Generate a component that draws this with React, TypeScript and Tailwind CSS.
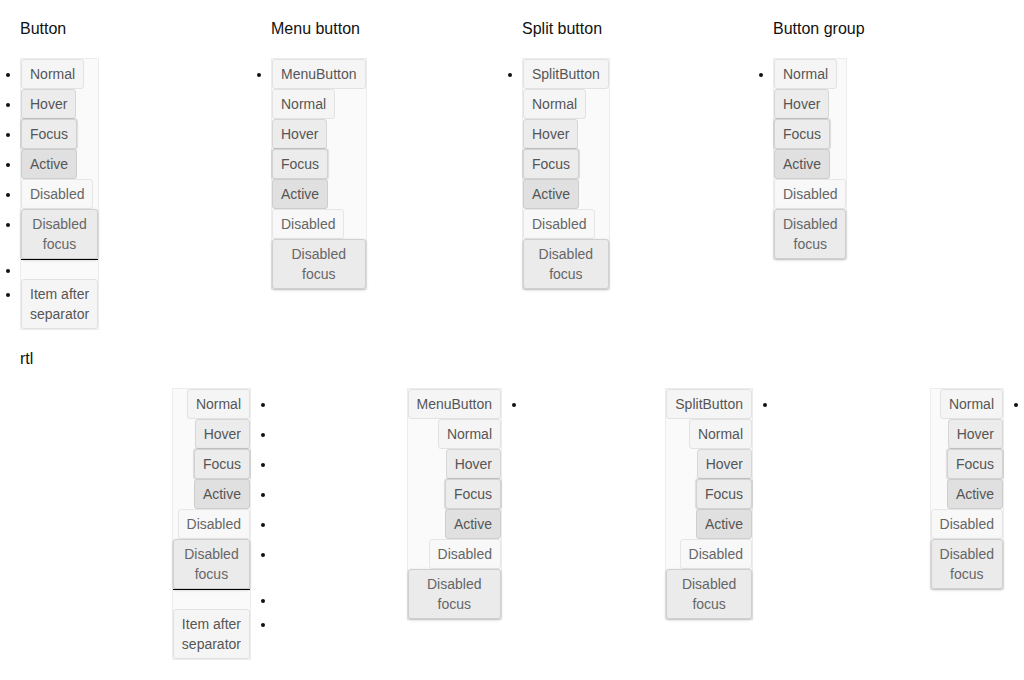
type State = "normal" | "hover" | "focus" | "active" | "disabled" | "disabledFocus";

const stateClass: Record<State, string> = {
  normal: "border-[#e2e2e2] bg-[#f5f5f5] text-[#555]",
  hover: "border-[#d6d6d6] bg-[#ececec] text-[#555]",
  focus: "border-[#d2d2d2] bg-[#ececec] text-[#555] shadow-[0_0_1px_1px_rgba(0,0,0,0.12)]",
  active: "border-[#cdcdcd] bg-[#e0e0e0] text-[#555]",
  disabled: "border-[#e6e6e6] bg-[#f8f8f8] text-[#666]",
  disabledFocus: "border-[#d0d0d0] bg-[#ebebeb] text-[#666] shadow-[0_1px_3px_rgba(0,0,0,0.22)]",
};

const states: { label: string; state: State }[] = [
  { label: "Normal", state: "normal" },
  { label: "Hover", state: "hover" },
  { label: "Focus", state: "focus" },
  { label: "Active", state: "active" },
  { label: "Disabled", state: "disabled" },
  { label: "Disabled focus", state: "disabledFocus" },
];

function Btn({ label, state = "normal" }: { label: string; state?: State }) {
  return (
    <span
      className={`inline-block rounded-[3px] border px-2 py-1 text-center align-top text-sm leading-5 ${stateClass[state]}`}
    >
      {label}
    </span>
  );
}

// Every item gets a bullet
function ButtonList() {
  return (
    <ul className="w-min list-disc border border-[#ececec] bg-[#fafafa]">
      {states.map((s) => (
        <li key={s.label} className="text-sm leading-[30px]">
          <Btn label={s.label} state={s.state} />
        </li>
      ))}
      <li className="h-5 border-t border-black text-sm leading-5" />
      <li className="text-sm leading-[30px]">
        <Btn label="Item after separator" />
      </li>
    </ul>
  );
}

// Only the first item (the trigger) gets a bullet
function NestedList({ trigger }: { trigger?: string }) {
  const items = trigger ? [{ label: trigger, state: "normal" as State }, ...states] : states;
  return (
    <ul className="w-min list-disc border border-[#ececec] bg-[#fafafa]">
      {items.map((s, i) => (
        <li key={s.label} className={`text-sm leading-[30px] ${i === 0 ? "" : "list-none"}`}>
          <Btn label={s.label} state={s.state} />
        </li>
      ))}
    </ul>
  );
}

const columns = [
  { title: "Button", body: <ButtonList /> },
  { title: "Menu button", body: <NestedList trigger="MenuButton" /> },
  { title: "Split button", body: <NestedList trigger="SplitButton" /> },
  { title: "Button group", body: <NestedList /> },
];

export default function App() {
  return (
    <div className="min-h-[680px] w-[1024px] bg-white px-5 font-['Liberation_Sans',Arial,sans-serif] text-[#111]">
      <section className="pt-[19px]">
        <div className="grid grid-cols-[repeat(4,231px)] gap-x-5">
          {columns.map((c) => (
            <div key={c.title} className="flex flex-col gap-[19px]">
              <h2 className="text-base leading-5">{c.title}</h2>
              {c.body}
            </div>
          ))}
        </div>
      </section>

      <section className="pt-[19px]">
        <h2 className="text-base leading-5">rtl</h2>
        <div className="mt-[19px] grid grid-cols-[repeat(4,231px)] gap-x-5">
          {columns.map((c) => (
            <div key={c.title} dir="rtl">
              {c.body}
            </div>
          ))}
        </div>
      </section>
    </div>
  );
}
